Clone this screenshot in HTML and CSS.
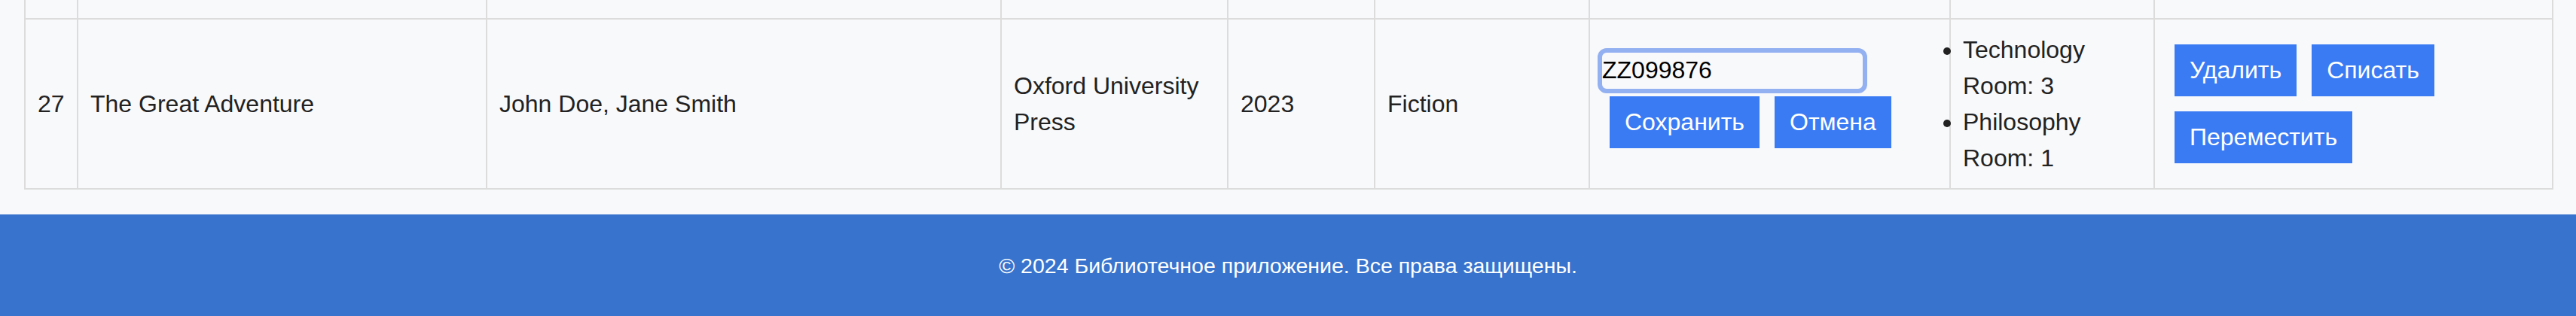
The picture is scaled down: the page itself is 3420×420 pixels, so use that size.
FILE: index.html
```html
<!DOCTYPE html>
<html lang="ru">
<head>
<meta charset="utf-8">
<title>Библиотека</title>
<link rel="stylesheet" href="styles.css">
</head>
<body>
<main class="container">
  <table class="books">
    <colgroup>
      <col class="c-id"><col class="c-title"><col class="c-author"><col class="c-pub"><col class="c-year"><col class="c-genre"><col class="c-isbn"><col class="c-loc"><col class="c-act">
    </colgroup>
    <tbody>
      <tr class="partial">
        <td></td><td></td><td></td><td></td><td></td><td></td><td></td><td></td><td></td>
      </tr>
      <tr>
        <td>27</td>
        <td>The Great Adventure</td>
        <td>John Doe, Jane Smith</td>
        <td>Oxford University Press</td>
        <td>2023</td>
        <td>Fiction</td>
        <td class="edit">
          <input class="isbn" type="text" value="ZZ099876">
          <div class="edit-btns">
            <button class="btn">Сохранить</button>
            <button class="btn">Отмена</button>
          </div>
        </td>
        <td>
          <ul class="locations">
            <li>Technology<br>Room: 3</li>
            <li>Philosophy<br>Room: 1</li>
          </ul>
        </td>
        <td>
          <div class="actions">
            <button class="btn">Удалить</button>
            <button class="btn">Списать</button>
            <button class="btn">Переместить</button>
          </div>
        </td>
      </tr>
    </tbody>
  </table>
</main>
<footer class="footer">
  <p>© 2024 Библиотечное приложение. Все права защищены.</p>
</footer>
</body>
</html>
```
FILE: styles.css
```css
* { box-sizing: border-box; }

html, body {
  margin: 0;
  padding: 0;
  background: #f8f9fb;
}

body {
  font-family: "Liberation Sans", Arial, Helvetica, sans-serif;
  font-size: 32px;
  line-height: 1.5;
  color: #222;
}

.container {
  padding: 0 32px 33px;
}

.books {
  width: 3356px;
  table-layout: fixed;
  border-collapse: collapse;
}

.c-id { width: 70px; }
.c-title { width: 543px; }
.c-author { width: 683px; }
.c-pub { width: 301px; }
.c-year { width: 195px; }
.c-genre { width: 285px; }
.c-isbn { width: 479px; }
.c-loc { width: 271px; }
.c-act { width: 529px; }

.books td {
  border: 2px solid #dcdcdc;
  padding: 16px;
  vertical-align: middle;
  text-align: left;
}

.books .partial td {
  border-top: none;
  padding: 0;
  height: 25px;
}

.isbn {
  display: block;
  width: 346px;
  height: 48px;
  margin: 0;
  padding: 0;
  border: 0;
  border-radius: 6px;
  outline: 6px solid #93b0f1;
  background: transparent;
  font-family: inherit;
  font-size: 32px;
  color: #000;
}

.edit-btns {
  display: flex;
  gap: 20px;
  margin-top: 10px;
  padding: 0 10px 10px;
}

.btn {
  font-family: inherit;
  font-size: 32px;
  line-height: normal;
  padding: 16px 20px;
  border: 0;
  border-radius: 0;
  background: #3a7bf4;
  color: #fff;
}

.locations {
  margin: 0;
  padding: 0;
}

.actions {
  display: flex;
  flex-wrap: wrap;
  gap: 20px;
  padding: 10px;
}

.footer {
  background: #3874cd;
  color: #fff;
  text-align: center;
  padding: 24px 0;
  font-size: 28.5px;
  line-height: 32px;
}

.footer p {
  margin: 28px 0;
}
```
